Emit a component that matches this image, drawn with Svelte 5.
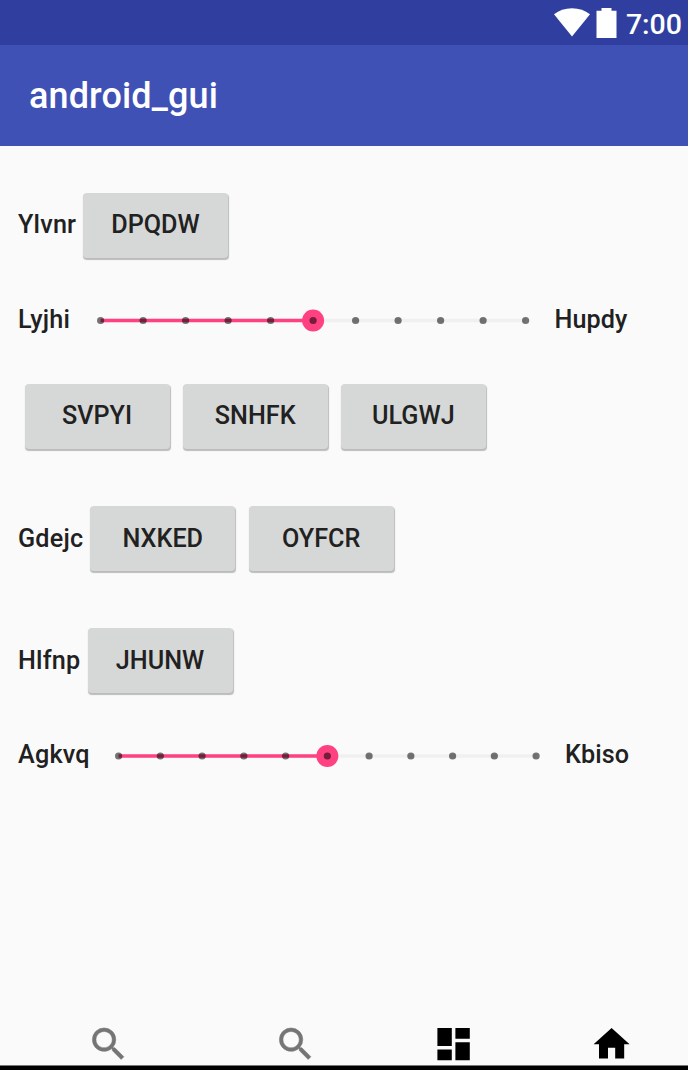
<script>
  const ticks = Array.from({ length: 11 }, (_, i) => i);
  const searchPath =
    'M15.5 14h-.79l-.28-.27A6.47 6.47 0 0 0 16 9.5 6.5 6.5 0 1 0 9.5 16c1.61 0 3.09-.59 4.23-1.57l.27.28v.79l5 4.99L20.49 19l-4.99-5zm-6 0C7.01 14 5 11.99 5 9.5S7.01 5 9.5 5 14 7.01 14 9.5 11.99 14 9.5 14z';
  const nav = [
    { name: 'search', path: searchPath, muted: true },
    { name: 'find', path: searchPath, muted: true },
    { name: 'dashboard', path: 'M3 13h8V3H3v10zm0 8h8v-6H3v6zm10 0h8V11h-8v10zm0-18v6h8V3h-8z' },
    { name: 'home', path: 'M10 20v-6h4v6h5v-8h3L12 3 2 12h3v8z' }
  ];
</script>

{#snippet slider(length, y)}
  {@const start = 12.6}
  <svg class="slider" width={length + 24} height="24" viewBox="0 0 {length + 24} 24">
    <path d="M{start} {y}h{length}" stroke="#f0f0f0" stroke-width="3.6" />
    <path d="M{start} {y}h{length / 2}" stroke="#ff4081" stroke-width="3.6" />
    <circle cx={start + length / 2} cy={y} r="11" fill="#ff4081" />
    {#each ticks as i}
      <circle cx={start + (length * i) / 10} cy={y} r="3.6" fill="#000" fill-opacity=".54" />
    {/each}
  </svg>
{/snippet}

<div class="screen">
  <div class="status">
    <svg class="wifi" width="36" height="29" viewBox="0 0 36 29">
      <path d="M0 6.2C5 2.2 11 .2 18 .2s13 2 18 6L18 28.4z" fill="#fff" />
    </svg>
    <svg class="battery" width="21" height="30" viewBox="0 0 21 30">
      <path d="M5.5 0h10v2.8h5V30H.5V2.8h5z" fill="#fff" />
    </svg>
    <span>7:00</span>
  </div>
  <header>android_gui</header>
  <main>
    <div class="row first">
      <span class="label ylvnr">Ylvnr</span>
      <button>DPQDW</button>
    </div>
    <div class="range upper">
      <span class="label lyjhi">Lyjhi</span>
      {@render slider(425, 11.5)}
      <span class="label end">Hupdy</span>
    </div>
    <div class="row trio">
      <button>SVPYI</button>
      <button>SNHFK</button>
      <button>ULGWJ</button>
    </div>
    <div class="row">
      <span class="label gdejc">Gdejc</span>
      <button>NXKED</button>
      <button>OYFCR</button>
    </div>
    <div class="row">
      <span class="label hlfnp">Hlfnp</span>
      <button>JHUNW</button>
    </div>
    <div class="range lower">
      <span class="label agkvq">Agkvq</span>
      {@render slider(417.5, 12)}
      <span class="label end">Kbiso</span>
    </div>
  </main>
  <nav>
    {#each nav as item}
      <svg class={item.name} class:muted={item.muted} width="43.2" height="43.2" viewBox="0 -0.3 24 24">
        <path d={item.path} />
      </svg>
    {/each}
  </nav>
</div>

<style>
  :global(body) {
    margin: 0;
  }
  .screen {
    width: 688px;
    height: 1070px;
    box-sizing: border-box;
    display: flex;
    flex-direction: column;
    overflow: hidden;
    background: #fafafa;
    border-bottom: 4px solid #000;
    font-family: Roboto, sans-serif;
    font-weight: 500;
    color: #212121;
  }
  svg {
    display: block;
    flex: none;
  }
  .status {
    height: 45px;
    flex: none;
    display: flex;
    justify-content: flex-end;
    align-items: flex-start;
    box-sizing: border-box;
    padding: 8px 6px 0 0;
    background: #303f9f;
    color: #fff;
    font-size: 28.5px;
    line-height: 33px;
  }
  .wifi {
    margin-right: 6px;
  }
  .battery {
    margin-right: 9px;
  }
  header {
    height: 101px;
    flex: none;
    box-sizing: border-box;
    padding: 1px 0 0 29px;
    background: #3f51b5;
    color: #fff;
    font-size: 36px;
    line-height: 101px;
    letter-spacing: 0.12px;
  }
  main {
    flex: 1;
    padding: 46px 18px 0;
  }
  .row {
    height: 66px;
    display: flex;
    align-items: center;
    margin-bottom: 56px;
  }
  .row.first {
    margin-bottom: 51px;
  }
  .label {
    font-size: 25.2px;
    line-height: 30px;
    white-space: nowrap;
    flex: none;
    letter-spacing: 0.2px;
  }
  .row .label {
    padding-top: 1px;
  }
  .row.first .label {
    padding-top: 0;
  }
  button {
    width: 145px;
    height: 65px;
    flex: none;
    margin: 0 13.4px 0 0;
    padding: 1px 0 0;
    border: 0;
    border-radius: 4px;
    background: #d6d7d7;
    box-shadow: 0.5px 1.5px 1px rgba(0, 0, 0, 0.25);
    color: #212121;
    font: 500 25.2px/30px Roboto, sans-serif;
  }
  .first button,
  .trio button {
    padding: 0 0 1px;
  }
  .ylvnr {
    width: 65px;
  }
  .gdejc {
    width: 72.3px;
  }
  .hlfnp {
    width: 69.5px;
  }
  .range {
    height: 24px;
    display: flex;
    align-items: center;
  }
  .range .label {
    position: relative;
    top: -1px;
  }
  .range .end {
    margin-left: 17.5px;
    letter-spacing: 0.05px;
  }
  .upper {
    margin-bottom: 50px;
  }
  .lower {
    margin-top: -5px;
  }
  .lyjhi {
    width: 70px;
  }
  .agkvq {
    width: 88px;
  }
  .trio {
    padding-left: 6.5px;
  }
  .trio button {
    margin-right: 13.2px;
  }
  nav {
    height: 43px;
    flex: none;
    display: flex;
    border-bottom: 1px solid #777;
  }
  .muted {
    fill: #757575;
    stroke: #757575;
    stroke-width: 0.3;
  }
  .search {
    margin-left: 86.6px;
  }
  .find {
    margin-left: 143.8px;
  }
  .dashboard {
    margin-left: 114.8px;
  }
  .home {
    margin-left: 115.6px;
  }
</style>
